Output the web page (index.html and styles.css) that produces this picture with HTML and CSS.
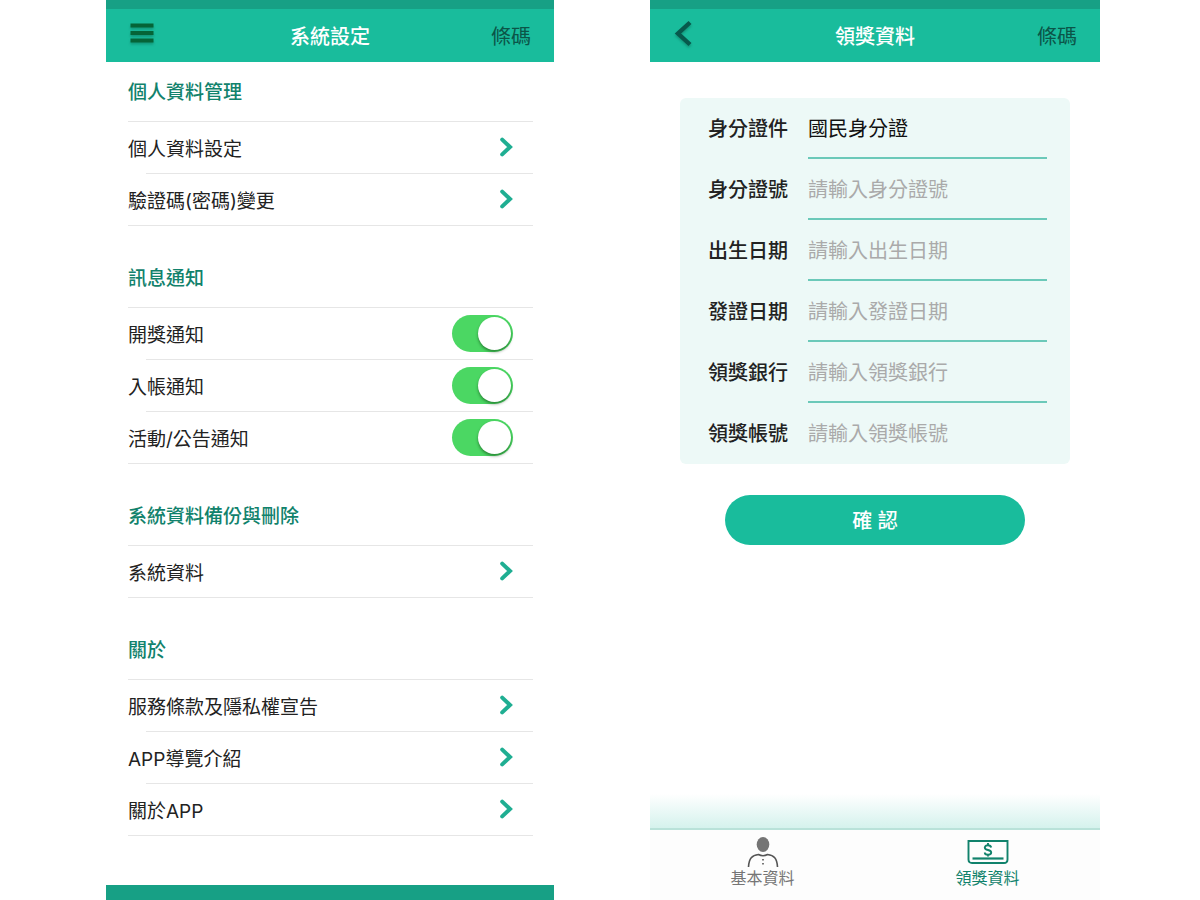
FILE: index.html
```html
<!DOCTYPE html>
<html lang="zh-Hant">
<head>
<meta charset="utf-8">
<meta name="viewport" content="width=device-width, initial-scale=1">
<title>系統設定</title>
<link rel="stylesheet" href="styles.css">
</head>
<body>
<svg class="sprite" aria-hidden="true">
  <symbol id="chevron" viewBox="0 0 14 20"><path d="M3.200 2.600 L11 10 L3.200 17.400" fill="none" stroke="currentColor" stroke-width="4" stroke-linecap="round"/></symbol>
</svg>
<main class="screens">
  <section class="phone">
    <header class="topbar">
      <button class="icon-button" type="button" aria-label="選單">
        <svg width="26" height="24" viewBox="0 0 26 24"><path d="M1.500 4.500h23M1.500 12h23M1.500 19.500h23" stroke="#056437" stroke-width="4.200"/></svg>
      </button>
      <h1 class="topbar-title">系統設定</h1>
      <a class="topbar-link" href="#barcode">條碼</a>
    </header>
    <div class="settings">
      <section class="group">
        <h2 class="group-title">個人資料管理</h2>
        <a class="row" href="#profile">個人資料設定<svg class="chevron"><use href="#chevron"/></svg></a>
        <a class="row" href="#password">驗證碼(密碼)變更<svg class="chevron"><use href="#chevron"/></svg></a>
      </section>
      <section class="group">
        <h2 class="group-title">訊息通知</h2>
        <label class="row">開獎通知<input class="switch" type="checkbox" checked></label>
        <label class="row">入帳通知<input class="switch" type="checkbox" checked></label>
        <label class="row">活動/公告通知<input class="switch" type="checkbox" checked></label>
      </section>
      <section class="group">
        <h2 class="group-title">系統資料備份與刪除</h2>
        <a class="row" href="#data">系統資料<svg class="chevron"><use href="#chevron"/></svg></a>
      </section>
      <section class="group">
        <h2 class="group-title">關於</h2>
        <a class="row" href="#terms">服務條款及隱私權宣告<svg class="chevron"><use href="#chevron"/></svg></a>
        <a class="row" href="#tour">APP導覽介紹<svg class="chevron"><use href="#chevron"/></svg></a>
        <a class="row" href="#about">關於APP<svg class="chevron"><use href="#chevron"/></svg></a>
      </section>
    </div>
    <div class="bottom-strip"></div>
  </section>

  <section class="phone">
    <header class="topbar">
      <button class="icon-button" type="button" aria-label="返回">
        <svg width="22" height="30" viewBox="0 0 22 30"><path d="M17 4.500 L5 15.500 L17 26.500" fill="none" stroke="#07594c" stroke-width="4.400"/></svg>
      </button>
      <h1 class="topbar-title">領獎資料</h1>
      <a class="topbar-link" href="#barcode">條碼</a>
    </header>
    <form class="claim">
      <div class="card">
        <div class="field"><label for="doc">身分證件</label><select id="doc" class="control"><option>國民身分證</option></select></div>
        <div class="field"><label for="idno">身分證號</label><input id="idno" class="control" type="text" placeholder="請輸入身分證號"></div>
        <div class="field"><label for="birth">出生日期</label><input id="birth" class="control" type="text" placeholder="請輸入出生日期"></div>
        <div class="field"><label for="issued">發證日期</label><input id="issued" class="control" type="text" placeholder="請輸入發證日期"></div>
        <div class="field"><label for="bank">領獎銀行</label><input id="bank" class="control" type="text" placeholder="請輸入領獎銀行"></div>
        <div class="field"><label for="account">領獎帳號</label><input id="account" class="control" type="text" placeholder="請輸入領獎帳號"></div>
      </div>
      <button class="confirm" type="button">確 認</button>
    </form>
    <div class="fade"></div>
    <nav class="tabs">
      <a class="tab" href="#basic">
        <svg width="32" height="32" viewBox="0 0 32 32"><ellipse cx="16" cy="8.500" rx="6.300" ry="7.600" fill="#757575"/><path d="M1.500 31 C2 22 5 19.500 11.500 18.500 Q16 21 20.500 18.500 C27 19.500 30 22 30.500 31" fill="none" stroke="#555" stroke-width="1.600"/><path d="M16 23v1.500M16 27v1.500" stroke="#555" stroke-width="1.600"/></svg>
        <span>基本資料</span>
      </a>
      <a class="tab tab-active" href="#claim" aria-current="page">
        <svg width="42" height="32" viewBox="0 0 42 32"><path d="M1.500 5h39v18.500q0 3.500-3.500 3.500h-32Q1.500 27 1.500 23.500z" fill="none" stroke="currentColor" stroke-width="1.900"/><path d="M5.500 22.500h31" stroke="currentColor" stroke-width="2.200"/><path d="M24.200 11.500q-.5-2.300-3.200-2.300t-3.200 2.200q0 1.900 3.200 2.600t3.200 2.600q0 2.200-3.200 2.200t-3.200-2.300M21 7v2.500M21 18.500v2" fill="none" stroke="currentColor" stroke-width="1.900"/></svg>
        <span>領獎資料</span>
      </a>
    </nav>
  </section>
</main>
</body>
</html>
```
FILE: styles.css
```css
* { box-sizing: border-box; }

body {
  margin: 0;
  background: #fff;
  color: #222;
  font-family: Inter, "Noto Sans CJK TC", sans-serif;
  font-size: 19px;
  line-height: 28px;
}

a { color: inherit; text-decoration: none; }
button, input, select { font: inherit; }
.sprite { display: none; }

.screens {
  display: grid;
  grid-template-columns: 448fr 450fr;
  column-gap: 96px;
  min-height: 100vh;
  padding: 0 100px 0 106px;
}

.phone { display: flex; flex-direction: column; }

.topbar {
  display: grid;
  grid-template-columns: 1fr auto 1fr;
  align-items: center;
  height: 62px;
  padding: 2px 23px 0;
  border-top: 9px solid #17a085;
  background: #19bc9c;
  font-size: 20px;
}

.icon-button {
  display: flex;
  justify-self: start;
  padding: 0 0 7px;
  border: 0;
  background: none;
}

.icon-button svg { filter: drop-shadow(0 2px 1px rgba(0, 70, 50, 0.3)); }

.topbar-title {
  margin: 0;
  color: #fff;
  font-size: 20px;
  font-weight: 500;
}

.topbar-link { justify-self: end; color: #0b5548; }

.settings { padding: 0 21px 0 22px; }

.group + .group { margin-top: 22px; }

.group-title {
  margin: 0;
  padding: 17px 0 14px;
  border-bottom: 1px solid #e6e6e6;
  color: #11826c;
  font-size: 19px;
  font-weight: 500;
}

.row {
  display: flex;
  align-items: center;
  justify-content: space-between;
  height: 52px;
  padding: 3px 20px 0 0;
  background: linear-gradient(#e6e6e6, #e6e6e6) 18px 100% / 100% 1px no-repeat;
}

.row:last-child { background-position: 0 100%; }

.chevron {
  width: 14px;
  height: 20px;
  margin-bottom: 5px;
  color: #1fae92;
}

.switch {
  appearance: none;
  width: 61px;
  height: 37px;
  margin: 0 0 5px;
  padding: 2px;
  border-radius: 19px;
  background: #4bd763;
}

.switch::before {
  content: "";
  display: block;
  width: 33px;
  height: 33px;
  border-radius: 50%;
  background: #fff;
  box-shadow: 0 2px 3px rgba(0, 40, 0, 0.45);
}

.switch:checked::before { margin-left: auto; }

.bottom-strip {
  height: 15px;
  margin-top: auto;
  background: #17a085;
}

.claim { padding: 36px 30px 0; }

.card {
  padding: 0 23px 0 28px;
  border-radius: 6px;
  background: #edf9f7;
}

.field {
  display: grid;
  grid-template-columns: 100px 1fr;
  align-items: center;
  height: 61px;
  font-size: 20px;
}

.field label { font-weight: 500; }

.control {
  appearance: none;
  width: 100%;
  height: 61px;
  padding: 2px 0 0;
  border: 0;
  border-bottom: 2px solid #6bc9b9;
  border-radius: 0;
  outline: 0;
  background: none;
  color: #111;
}

.field:last-child .control { border-color: transparent; }

.control::placeholder { color: #aaa; opacity: 1; }

.confirm {
  display: block;
  width: calc(100% - 90px);
  height: 50px;
  margin: 31px auto 0;
  padding: 2px 0 0;
  border: 0;
  border-radius: 25px;
  background: #19bc9c;
  color: #fff;
  font-size: 20px;
  font-weight: 500;
}

.fade {
  height: 36px;
  margin-top: auto;
  border-bottom: 2px solid #b9e2d9;
  background: linear-gradient(#fff, #d5f2ed);
}

.tabs {
  display: grid;
  grid-template-columns: 1fr 1fr;
  height: 70px;
  background: #fdfdfd;
  font-size: 16px;
  line-height: 20px;
}

.tab {
  display: flex;
  flex-direction: column;
  align-items: center;
  padding-top: 6px;
  color: #757575;
}

.tab-active { color: #11826c; }
```
